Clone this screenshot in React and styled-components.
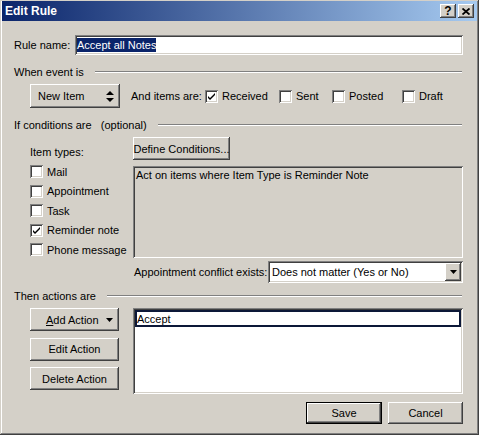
import React from "react";
import styled, { createGlobalStyle } from "styled-components";

const GlobalStyle = createGlobalStyle`
  html, body {
    margin: 0;
    padding: 0;
    background: #d4d0c8;
  }
  body {
    font-family: "Liberation Sans", Arial, sans-serif;
    font-size: 11px;
    color: #000;
  }
`;

const raised = `
  box-shadow: inset -1px -1px #404040, inset 1px 1px #ffffff,
    inset -2px -2px #808080, inset 2px 2px #d4d0c8;
`;

const sunken = `
  box-shadow: inset 1px 1px #808080, inset -1px -1px #ffffff,
    inset 2px 2px #404040, inset -2px -2px #d4d0c8;
`;

const Window = styled.div`
  width: 479px;
  height: 435px;
  box-sizing: border-box;
  background: #d4d0c8;
  padding: 1px 2px 2px 2px;
  box-shadow: inset -1px -1px #404040, inset 1px 1px #d4d0c8,
    inset -2px -2px #808080, inset 2px 2px #ffffff;
  display: flex;
  flex-direction: column;
`;

const TitleBar = styled.div`
  height: 20px;
  display: flex;
  align-items: center;
  justify-content: space-between;
  padding: 0 3px;
  background: linear-gradient(to right, #0a246a, #a6caf0);
`;

const Title = styled.span`
  color: #fff;
  font-weight: bold;
  font-size: 12px;
`;

const TitleButtons = styled.div`
  display: flex;
  gap: 2px;
`;

const TitleButton = styled.div`
  width: 16px;
  height: 14px;
  background: #d4d0c8;
  ${raised}
  display: flex;
  align-items: center;
  justify-content: center;
  font-weight: bold;
  font-size: 12px;
  line-height: 1;
`;

const Body = styled.div`
  display: flex;
  flex-direction: column;
  padding: 0 14px 0 12px;
`;

const Row = styled.div`
  display: flex;
  align-items: center;
  margin-top: ${(p) => p.mt || 0}px;
  height: ${(p) => p.h}px;
  padding-left: ${(p) => p.indent || 0}px;
`;

const Label = styled.span`
  width: ${(p) => (p.w ? `${p.w}px` : "auto")};
  flex: none;
  white-space: nowrap;
`;

const TextField = styled.div`
  flex: 1;
  height: 20px;
  background: #fff;
  ${sunken}
  display: flex;
  align-items: center;
  padding-left: 2px;
`;

const Selected = styled.span`
  background: #0a246a;
  color: #fff;
  padding: 1px 0;
`;

const Heading = styled.div`
  display: flex;
  align-items: center;
  height: 14px;
  margin-top: ${(p) => p.mt}px;
  padding-right: 1px;
`;

const HeadingText = styled.span`
  white-space: pre;
  margin-right: 11px;
`;

const Etch = styled.div`
  flex: 1;
  height: 0;
  border-top: 1px solid #808080;
  border-bottom: 1px solid #ffffff;
`;

const Button = styled.div`
  width: ${(p) => p.w}px;
  height: ${(p) => p.h || 23}px;
  box-sizing: border-box;
  background: #d4d0c8;
  ${raised}
  display: flex;
  align-items: center;
  justify-content: ${(p) => (p.spread ? "space-between" : "center")};
  padding: ${(p) => (p.spread ? "0 6px 0 8px" : "0")};
  flex: none;
  white-space: nowrap;
`;

const DefaultButton = styled(Button)`
  outline: 1px solid #000;
  outline-offset: -1px;
  box-shadow: inset -2px -2px #404040, inset 2px 2px #ffffff,
    inset -3px -3px #808080;
`;

const CheckGroup = styled.div`
  display: flex;
  align-items: center;
`;

const CheckItem = styled.label`
  display: flex;
  align-items: center;
  gap: 4px;
  width: ${(p) => (p.w ? `${p.w}px` : "auto")};
  height: ${(p) => (p.h ? `${p.h}px` : "auto")};
  flex: none;
  white-space: nowrap;
`;

const Box = styled.span`
  width: 13px;
  height: 13px;
  box-sizing: border-box;
  background: #fff;
  ${sunken}
  display: flex;
  align-items: center;
  justify-content: center;
  flex: none;
`;

const Twin = styled.div`
  display: grid;
  grid-template-columns: 103px 1fr;
  padding-left: 16px;
  margin-top: ${(p) => p.mt}px;
  height: ${(p) => p.h}px;
`;

const Column = styled.div`
  display: flex;
  flex-direction: column;
  gap: ${(p) => p.gap || 0}px;
`;

const ItemTypesLabel = styled.div`
  height: 14px;
  margin-top: 8px;
  margin-bottom: 3px;
  display: flex;
  align-items: center;
`;

const ConditionText = styled.div`
  margin-top: 6px;
  height: 92px;
  box-sizing: border-box;
  ${sunken}
  padding: 3px 3px;
`;

const Select = styled.div`
  flex: 1;
  height: 22px;
  box-sizing: border-box;
  background: #fff;
  ${sunken}
  display: flex;
  align-items: center;
  justify-content: space-between;
  padding: 2px 2px 2px 4px;
`;

const DropButton = styled.div`
  width: 16px;
  height: 18px;
  box-sizing: border-box;
  background: #d4d0c8;
  ${raised}
  display: flex;
  align-items: center;
  justify-content: center;
`;

const ListBox = styled.div`
  height: 86px;
  box-sizing: border-box;
  background: #fff;
  ${sunken}
  padding: 2px;
`;

const EditItem = styled.div`
  height: 17px;
  box-sizing: border-box;
  border: 2px solid #0c1838;
  display: flex;
  align-items: center;
  padding-left: 0;
`;

const Footer = styled.div`
  display: flex;
  justify-content: flex-end;
  gap: 6px;
  margin-top: 8px;
`;

const Underline = styled.span`
  text-decoration: underline;
`;

function Check() {
  return (
    <svg width="9" height="9" viewBox="0 0 9 9">
      <path d="M1 4 L3 6 L8 1 L8 3 L3 8 L1 6 Z" fill="#000" />
    </svg>
  );
}

function CheckBox({ checked, children, w, h }) {
  return (
    <CheckItem w={w} h={h}>
      <Box>{checked && <Check />}</Box>
      {children}
    </CheckItem>
  );
}

function DownArrow() {
  return (
    <svg width="7" height="4" viewBox="0 0 7 4">
      <polygon points="0,0 7,0 3.5,4" fill="#000" />
    </svg>
  );
}

function UpDown() {
  return (
    <svg width="8" height="11" viewBox="0 0 8 11">
      <polygon points="0,4 4,0 8,4" fill="#000" />
      <polygon points="0,7 8,7 4,11" fill="#000" />
    </svg>
  );
}

function CloseGlyph() {
  return (
    <svg width="8" height="7" viewBox="0 0 8 7">
      <path d="M0.5 0.5 L7.5 6.5 M7.5 0.5 L0.5 6.5" stroke="#000" strokeWidth="1.8" />
    </svg>
  );
}

export default function App() {
  return (
    <>
      <GlobalStyle />
      <Window>
        <TitleBar>
          <Title>Edit Rule</Title>
          <TitleButtons>
            <TitleButton>?</TitleButton>
            <TitleButton>
              <CloseGlyph />
            </TitleButton>
          </TitleButtons>
        </TitleBar>
        <Body>
          <Row mt={14} h={20}>
            <Label w={61}>Rule name:</Label>
            <TextField>
              <Selected>Accept all Notes</Selected>
            </TextField>
          </Row>

          <Heading mt={10}>
            <HeadingText>When event is</HeadingText>
            <Etch />
          </Heading>

          <Row mt={5} h={24} indent={16}>
            <Button w={90} h={24} spread>
              New Item
              <UpDown />
            </Button>
            <Label w={74} style={{ marginLeft: 11 }}>
              And items are:
            </Label>
            <CheckGroup>
              <CheckBox checked w={74}>
                Received
              </CheckBox>
              <CheckBox w={53}>Sent</CheckBox>
              <CheckBox w={70}>Posted</CheckBox>
              <CheckBox>Draft</CheckBox>
            </CheckGroup>
          </Row>

          <Heading mt={10}>
            <HeadingText>If conditions are   (optional)</HeadingText>
            <Etch />
          </Heading>

          <Twin mt={5} h={121}>
            <Column>
              <ItemTypesLabel>Item types:</ItemTypesLabel>
              <CheckBox h={19.5}>Mail</CheckBox>
              <CheckBox h={19.5}>Appointment</CheckBox>
              <CheckBox h={19.5}>Task</CheckBox>
              <CheckBox h={19.5} checked>
                Reminder note
              </CheckBox>
              <CheckBox h={19.5}>Phone message</CheckBox>
            </Column>
            <Column>
              <Button w={97}>Define Conditions...</Button>
              <ConditionText>Act on items where Item Type is Reminder Note</ConditionText>
            </Column>
          </Twin>

          <Row mt={2} h={23} indent={120}>
            <Label w={134}>Appointment conflict exists:</Label>
            <Select>
              <span>Does not matter (Yes or No)</span>
              <DropButton>
                <DownArrow />
              </DropButton>
            </Select>
          </Row>

          <Heading mt={6}>
            <HeadingText>Then actions are</HeadingText>
            <Etch />
          </Heading>

          <Twin mt={5} h={86}>
            <Column gap={6.5}>
              <Button w={89} spread>
                <span style={{ marginLeft: 8 }}>
                  <Underline>A</Underline>dd Action
                </span>
                <DownArrow />
              </Button>
              <Button w={89}>Edit Action</Button>
              <Button w={89}>Delete Action</Button>
            </Column>
            <ListBox>
              <EditItem>Accept</EditItem>
            </ListBox>
          </Twin>

          <Footer>
            <DefaultButton w={76} h={22}>
              Save
            </DefaultButton>
            <Button w={75} h={22}>
              Cancel
            </Button>
          </Footer>
        </Body>
      </Window>
    </>
  );
}
